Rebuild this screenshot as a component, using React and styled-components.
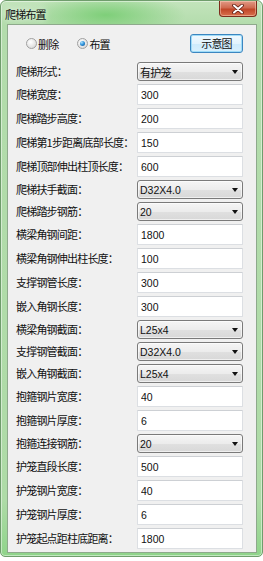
import React from 'react';
import styled, { createGlobalStyle } from 'styled-components';

const GlobalStyle = createGlobalStyle`
  body {
    margin: 0;
    background: #ffffff;
  }
`;

const cjk = `"Noto Sans CJK SC", "Liberation Sans", sans-serif`;
const latin = `"Liberation Sans", "Noto Sans CJK SC", sans-serif`;

const Window = styled.div`
  box-sizing: border-box;
  width: 263px;
  height: 557px;
  display: flex;
  flex-direction: column;
  padding: 0 5px 3px 6px;
  border: 1px solid #6f9d6c;
  border-radius: 6px 6px 5px 5px;
  background:
    radial-gradient(ellipse 80px 22px at 105px 14px, rgba(120, 205, 115, 0.9), rgba(120, 205, 115, 0)),
    linear-gradient(to bottom, #c3e4bc 0px, #b3dcac 24px, #aedba7 90%, #8fd48a 100%);
  box-shadow: inset 0 0 0 1px rgba(255, 255, 255, 0.45);
`;

const TitleBar = styled.div`
  height: 23px;
  display: flex;
  align-items: flex-start;
`;

const Title = styled.div`
  font-family: ${cjk};
  font-size: 11px;
  letter-spacing: -0.8px;
  color: #111;
  line-height: 11px;
  margin: 8px 0 0 -2px;
  text-shadow: 0 0 6px rgba(255, 255, 255, 0.9);
`;

const CloseButton = styled.div`
  margin-left: auto;
  margin-right: 0;
  width: 38px;
  height: 16px;
  box-sizing: border-box;
  border: 1px solid #7d2c1c;
  border-top: none;
  border-radius: 0 0 4px 4px;
  background: linear-gradient(to bottom, #e19a86 0%, #cf6a50 45%, #c04628 55%, #d8704c 100%);
  box-shadow: inset 0 0 0 1px rgba(255, 220, 200, 0.45);
  display: flex;
  align-items: center;
  justify-content: center;
`;

const Client = styled.div`
  flex: 1;
  box-sizing: border-box;
  border: 1px solid #8ea98c;
  background: #f0f0f0;
  padding: 9px 13px 0 8px;
  display: flex;
  flex-direction: column;
`;

const TopRow = styled.div`
  height: 19px;
  display: flex;
  align-items: center;
  padding-left: 10px;
`;

const RadioOption = styled.label`
  display: flex;
  align-items: center;
  gap: 1px;
  margin-right: 19px;
  font-family: ${cjk};
  font-size: 11px;
  letter-spacing: -0.8px;
  color: #111;
`;

const RadioCircle = styled.span`
  box-sizing: border-box;
  width: 11px;
  height: 11px;
  border-radius: 50%;
  border: 1px solid #a0a0a0;
  background: radial-gradient(circle at 40% 35%, #ffffff 0%, #e6e6e6 55%, #cfcfcf 100%);
  display: flex;
  align-items: center;
  justify-content: center;

  &::after {
    content: '';
    display: ${p => (p.checked ? 'block' : 'none')};
    width: 5px;
    height: 5px;
    border-radius: 50%;
    background: radial-gradient(circle at 35% 30%, #a9e0ff 0%, #2a8fd8 50%, #14508c 100%);
  }
`;

const ActionButton = styled.button`
  margin-left: auto;
  box-sizing: border-box;
  width: 53px;
  height: 19px;
  padding: 0;
  border: 1px solid #3c86c0;
  border-radius: 3px;
  background: linear-gradient(to bottom, #f0f9fe 0%, #e2f3fd 50%, #cdebfc 51%, #d9f0fd 100%);
  box-shadow: inset 0 0 0 1px #9fdcf8;
  font-family: ${cjk};
  font-size: 11px;
  letter-spacing: -0.8px;
  color: #111;
  line-height: 17px;
`;

const Form = styled.div`
  margin-top: 9px;
  display: grid;
  grid-template-columns: 121px 106px;
  row-gap: 3px;
  align-items: center;
`;

const Label = styled.div`
  font-family: ${cjk};
  font-size: 11px;
  letter-spacing: -0.8px;
  color: #111;
  line-height: 12px;
  white-space: nowrap;
  margin-top: -1px;
`;

const TextBox = styled.input`
  box-sizing: border-box;
  width: 106px;
  height: 21px;
  margin: 0;
  padding: 0 0 0 3px;
  border: 1px solid #dcdfe3;
  border-top-color: #cdd0d4;
  border-radius: 1px;
  background: #ffffff;
  font-family: ${latin};
  font-size: 10.5px;
  color: #111;
  outline: none;
`;

const ComboBox = styled.div`
  box-sizing: border-box;
  width: 106px;
  height: 19px;
  padding: 0 4px 0 2px;
  border: 1px solid #7a7a7a;
  border-radius: 3px;
  background: linear-gradient(to bottom, #f5f5f5 0%, #ececec 50%, #e0e0e0 51%, #d8d8d8 100%);
  box-shadow: inset 0 0 0 1px rgba(255, 255, 255, 0.6);
  display: flex;
  align-items: center;
`;

const ComboText = styled.span`
  flex: 1;
  font-family: ${p => (p.cjk ? cjk : latin)};
  font-size: ${p => (p.cjk ? '11px' : '10.5px')};
  letter-spacing: ${p => (p.cjk ? '-0.8px' : '0')};
  color: #111;
`;

const Arrow = styled.span`
  width: 0;
  height: 0;
  border-left: 3px solid transparent;
  border-right: 3px solid transparent;
  border-top: 4px solid #111;
  margin-top: 1px;
`;

const fields = [
  { label: '爬梯形式：', value: '有护笼', combo: true, cjk: true },
  { label: '爬梯宽度：', value: '300' },
  { label: '爬梯踏步高度：', value: '200' },
  { label: '爬梯第1步距离底部长度：', value: '150' },
  { label: '爬梯顶部伸出柱顶长度：', value: '600' },
  { label: '爬梯扶手截面：', value: 'D32X4.0', combo: true },
  { label: '爬梯踏步钢筋：', value: '20', combo: true },
  { label: '横梁角钢间距：', value: '1800' },
  { label: '横梁角钢伸出柱长度：', value: '100' },
  { label: '支撑钢管长度：', value: '300' },
  { label: '嵌入角钢长度：', value: '300' },
  { label: '横梁角钢截面：', value: 'L25x4', combo: true },
  { label: '支撑钢管截面：', value: 'D32X4.0', combo: true },
  { label: '嵌入角钢截面：', value: 'L25x4', combo: true },
  { label: '抱箍钢片宽度：', value: '40' },
  { label: '抱箍钢片厚度：', value: '6' },
  { label: '抱箍连接钢筋：', value: '20', combo: true },
  { label: '护笼直段长度：', value: '500' },
  { label: '护笼钢片宽度：', value: '40' },
  { label: '护笼钢片厚度：', value: '6' },
  { label: '护笼起点距柱底距离：', value: '1800' },
];

const App = () => {
  return (
    <>
      <GlobalStyle />
      <Window>
        <TitleBar>
          <Title>爬梯布置</Title>
          <CloseButton>
            <svg width="12" height="10" viewBox="0 0 12 10">
              <path d="M2 1.5 L10 8.5 M10 1.5 L2 8.5" stroke="#5a1a10" strokeWidth="3.6" strokeLinecap="round" />
              <path d="M2 1.5 L10 8.5 M10 1.5 L2 8.5" stroke="#ffffff" strokeWidth="2" strokeLinecap="round" />
            </svg>
          </CloseButton>
        </TitleBar>

        <Client>
          <TopRow>
            <RadioOption>
              <RadioCircle />
              删除
            </RadioOption>
            <RadioOption>
              <RadioCircle checked />
              布置
            </RadioOption>
            <ActionButton type="button">示意图</ActionButton>
          </TopRow>

          <Form>
            {fields.map(f => (
              <React.Fragment key={f.label}>
                <Label>{f.label}</Label>
                {f.combo ? (
                  <ComboBox>
                    <ComboText cjk={f.cjk}>{f.value}</ComboText>
                    <Arrow />
                  </ComboBox>
                ) : (
                  <TextBox type="text" defaultValue={f.value} />
                )}
              </React.Fragment>
            ))}
          </Form>
        </Client>
      </Window>
    </>
  );
};

export default App;
